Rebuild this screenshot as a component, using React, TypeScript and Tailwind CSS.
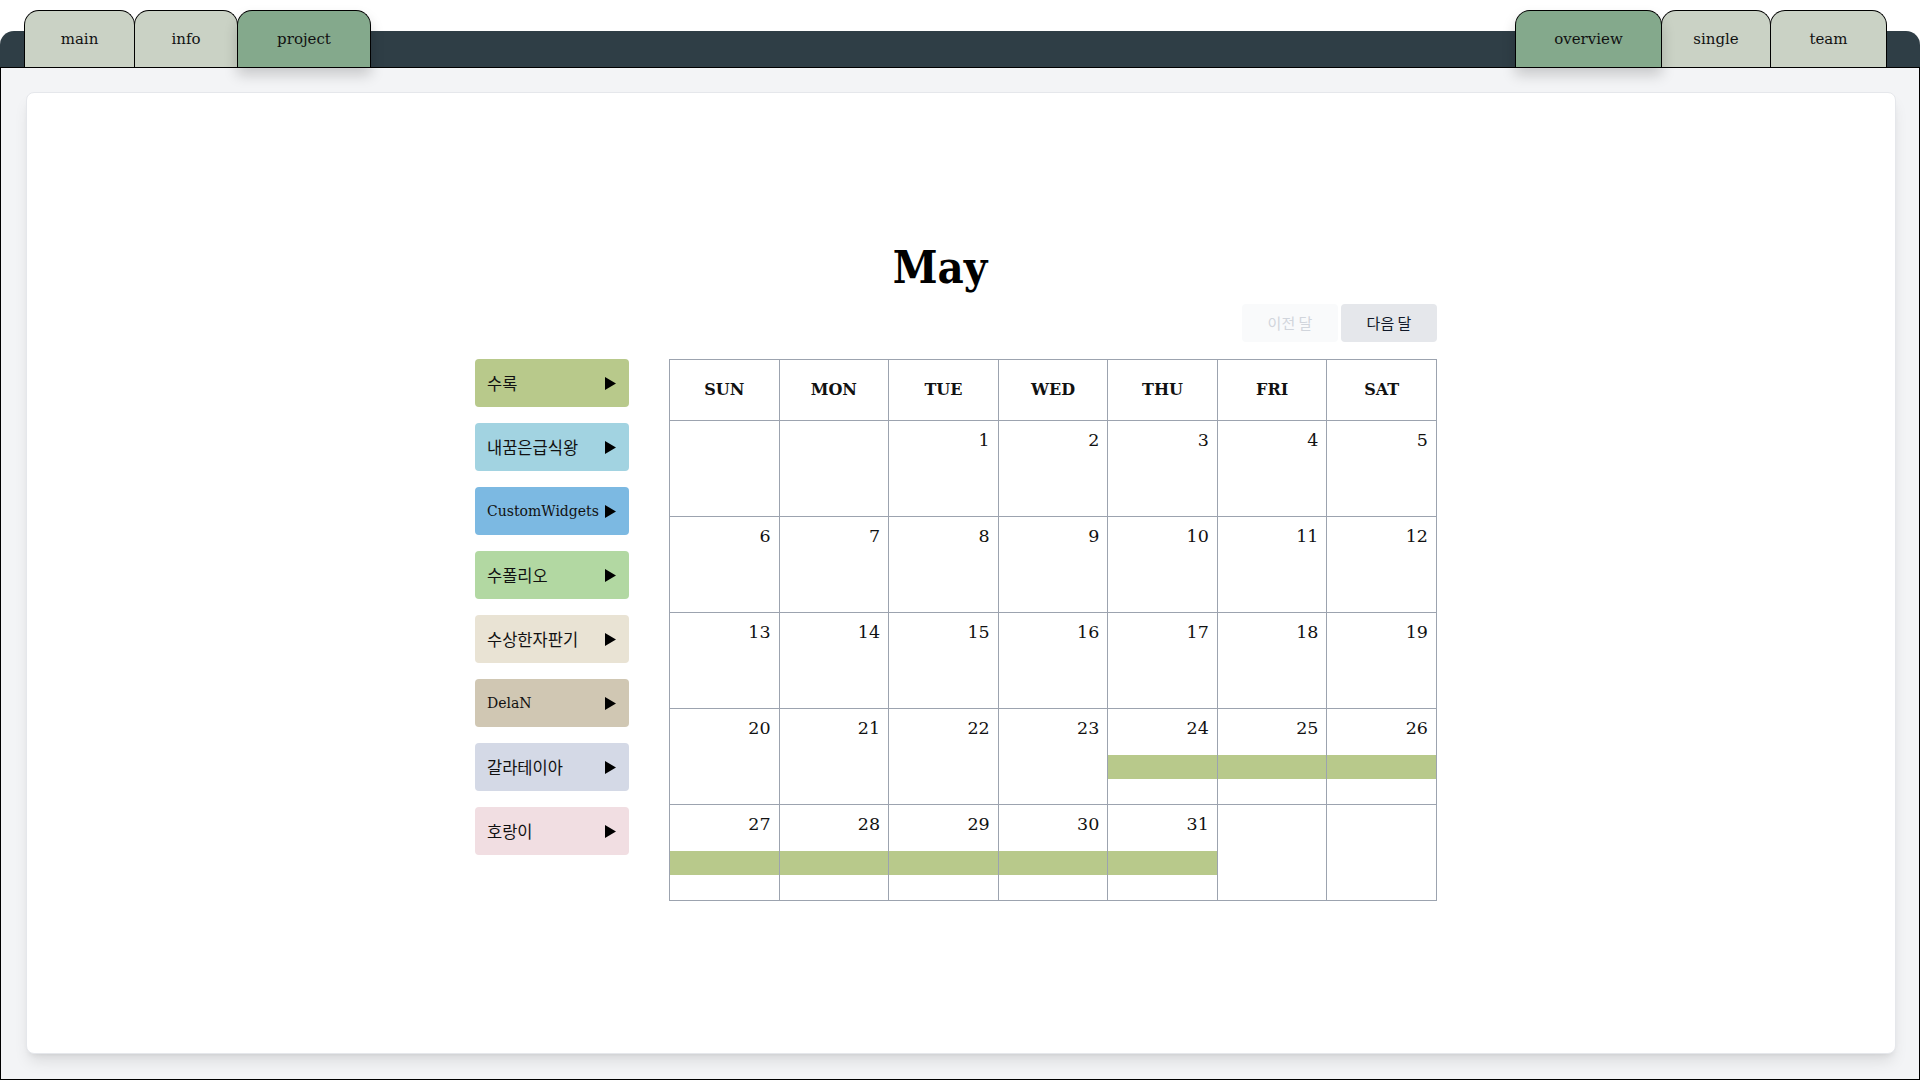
import React from "react";

const SERIF = { fontFamily: '"DejaVu Serif", "Noto Sans CJK KR", serif' };
const KR = { fontFamily: '"Noto Sans CJK KR", "Noto Sans", sans-serif' };

const leftTabs = [
  { label: "main", w: "w-[111px]", active: false },
  { label: "info", w: "w-[104px]", active: false },
  { label: "project", w: "w-[134px]", active: true },
];
const rightTabs = [
  { label: "overview", w: "w-[147px]", active: true },
  { label: "single", w: "w-[110px]", active: false },
  { label: "team", w: "w-[117px]", active: false },
];

const projects = [
  { name: "수록", bg: "bg-[#b8c98b]", kr: true },
  { name: "내꿈은급식왕", bg: "bg-[#a2d3e1]", kr: true },
  { name: "CustomWidgets", bg: "bg-[#7cb9e2]", kr: false },
  { name: "수폴리오", bg: "bg-[#b2d8a2]", kr: true },
  { name: "수상한자판기", bg: "bg-[#e9e3d4]", kr: true },
  { name: "DelaN", bg: "bg-[#d0c7b3]", kr: false },
  { name: "갈라테이아", bg: "bg-[#d4d9e6]", kr: true },
  { name: "호랑이", bg: "bg-[#f1dee2]", kr: true },
];

const days = ["SUN", "MON", "TUE", "WED", "THU", "FRI", "SAT"];

const cells: (number | null)[] = [];
for (let i = 0; i < 2; i++) cells.push(null);
for (let d = 1; d <= 31; d++) cells.push(d);
while (cells.length < 35) cells.push(null);

const eventDays = new Set([24, 25, 26, 27, 28, 29, 30, 31]);

function Tab({ label, w, active }: { label: string; w: string; active: boolean }) {
  return (
    <div
      className={`${w} h-[57px] -ml-px first:ml-0 flex items-center justify-center rounded-t-[15px] border border-b-0 border-black text-[15px] text-[#111] ${
        active ? "bg-[#84a98c] shadow-[0_8px_14px_rgba(0,0,0,0.18)] relative z-10" : "bg-[#cad2c5]"
      }`}
      style={SERIF}
    >
      {label}
    </div>
  );
}

function Triangle() {
  return (
    <svg width="11" height="13" viewBox="0 0 11 13" className="shrink-0">
      <polygon points="0,0 11,6.5 0,13" fill="#000" />
    </svg>
  );
}

export default function App() {
  return (
    <div className="w-[1920px] h-[1080px] bg-white flex flex-col overflow-hidden">
      <div className="relative z-10 mt-[31px] h-[36px] shrink-0 rounded-t-[14px] bg-[#2f3e46] flex items-end justify-between pl-[24px] pr-[33px]">
        <div className="flex items-end">
          {leftTabs.map((t) => (
            <Tab key={t.label} {...t} />
          ))}
        </div>
        <div className="flex items-end">
          {rightTabs.map((t) => (
            <Tab key={t.label} {...t} />
          ))}
        </div>
      </div>

      <div className="flex-1 flex border border-black bg-gray-100 pl-[25px] pr-[23px] pt-[24px] pb-[25px]">
        <div className="flex-1 bg-white rounded-lg border border-gray-200 shadow-lg">
          <div className="ml-[448px] w-[962px] mt-[151px] flex flex-col">
            <h1
              className="text-[45px] leading-[48px] font-bold font-stretch-condensed text-black text-center mr-[32px]"
              style={SERIF}
            >
              May
            </h1>
            <div className="mt-[12px] flex justify-end gap-[3px]" style={KR}>
              <button className="w-[96px] h-[38px] rounded bg-gray-50 text-[15px] text-gray-300">
                이전 달
              </button>
              <button className="w-[96px] h-[38px] rounded bg-gray-200 text-[15px] text-gray-900">
                다음 달
              </button>
            </div>
            <div className="mt-[17px] flex gap-[40px] items-start">
              <div className="w-[154px] flex flex-col gap-[16px]">
                {projects.map((p) => (
                  <div
                    key={p.name}
                    className={`${p.bg} h-[48px] rounded pl-[12px] pr-[13px] flex items-center justify-between text-[#111]`}
                  >
                    <span
                      className={`whitespace-nowrap ${p.kr ? "text-[16.5px]" : "text-[14px]"}`}
                      style={p.kr ? KR : SERIF}
                    >
                      {p.name}
                    </span>
                    <Triangle />
                  </div>
                ))}
              </div>
              <div className="w-[768px] grid grid-cols-7 border-l border-t border-[#9ca3af]" style={SERIF}>
                {days.map((d) => (
                  <div
                    key={d}
                    className="h-[61px] border-r border-b border-[#9ca3af] flex items-center justify-center text-[16px] font-bold text-[#111]"
                  >
                    {d}
                  </div>
                ))}
                {cells.map((c, i) => (
                  <div key={i} className="h-[96px] border-r border-b border-[#9ca3af] flex flex-col">
                    <div className="pt-[7px] pr-[8px] h-[32px] leading-[24px] text-right text-[17.5px] text-[#111]">
                      {c ?? ""}
                    </div>
                    {c !== null && eventDays.has(c) && (
                      <div className="mt-[14px] h-[24px] bg-[#b8c98b]" />
                    )}
                  </div>
                ))}
              </div>
            </div>
          </div>
        </div>
      </div>
    </div>
  );
}
